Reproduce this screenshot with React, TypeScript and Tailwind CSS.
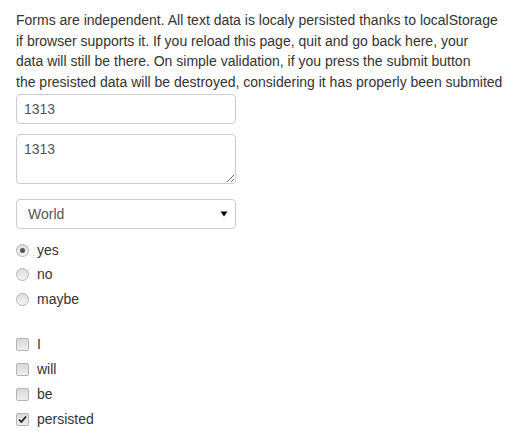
import React from 'react';

const radios = [
  { label: 'yes', checked: true },
  { label: 'no', checked: false },
  { label: 'maybe', checked: false },
];

const boxes = [
  { label: 'I', checked: false },
  { label: 'will', checked: false },
  { label: 'be', checked: false },
  { label: 'persisted', checked: true },
];

function Radio({ checked }: { checked: boolean }) {
  return (
    <span className="w-[13px] h-[13px] rounded-full border border-[#b4b4b4] bg-gradient-to-b from-[#dcdcdc] to-[#f4f4f4] flex items-center justify-center shrink-0">
      {checked && <span className="w-[5px] h-[5px] rounded-full bg-[#555]" />}
    </span>
  );
}

function Checkbox({ checked }: { checked: boolean }) {
  return (
    <span className="w-[13px] h-[13px] rounded-[2px] border border-[#b4b4b4] bg-gradient-to-b from-[#d8d8d8] to-[#eeeeee] flex items-center justify-center shrink-0">
      {checked && (
        <svg width="9" height="9" viewBox="0 0 9 9">
          <path d="M1 4.5 L3.4 7 L8 1.5" fill="none" stroke="#222" strokeWidth="1.8" />
        </svg>
      )}
    </span>
  );
}

export default function App() {
  return (
    <div className="bg-white min-h-[439px] px-4 pt-[10px] font-['Liberation_Sans',Arial,sans-serif] text-[14px] text-[#333]">
      <p className="leading-[20.5px] whitespace-nowrap">
        Forms are independent. All text data is localy persisted thanks to localStorage
        <br />
        if browser supports it. If you reload this page, quit and go back here, your
        <br />
        data will still be there. On simple validation, if you press the submit button
        <br />
        the presisted data will be destroyed, considering it has properly been submited
      </p>

      <form className="flex flex-col mt-[2px] w-[220px]">
        <input
          defaultValue="1313"
          className="h-[30px] border border-[#ccc] rounded-[4px] px-[7px] text-[14px] text-[#555] outline-none"
        />
        <textarea
          defaultValue="1313"
          className="mt-[10px] h-[50px] border border-[#ccc] rounded-[4px] px-[7px] pt-[4px] text-[14px] text-[#555] outline-none"
        />
        <div className="mt-[15px] h-[30px] border border-[#ccc] rounded-[4px] pl-[11px] pr-[7px] flex items-center justify-between text-[14px] text-[#555]">
          <span>World</span>
          <svg width="8" height="6" viewBox="0 0 8 6">
            <path d="M0.5 0.5 L7.5 0.5 L4 5.5 Z" fill="#000" />
          </svg>
        </div>
      </form>

      <div className="mt-[9px] flex flex-col">
        {radios.map((r) => (
          <label key={r.label} className="h-[24.5px] flex items-center gap-[8px]">
            <Radio checked={r.checked} />
            <span>{r.label}</span>
          </label>
        ))}
      </div>

      <div className="mt-[20px] flex flex-col">
        {boxes.map((b) => (
          <label key={b.label} className="h-[25px] flex items-center gap-[8px]">
            <Checkbox checked={b.checked} />
            <span>{b.label}</span>
          </label>
        ))}
      </div>
    </div>
  );
}
